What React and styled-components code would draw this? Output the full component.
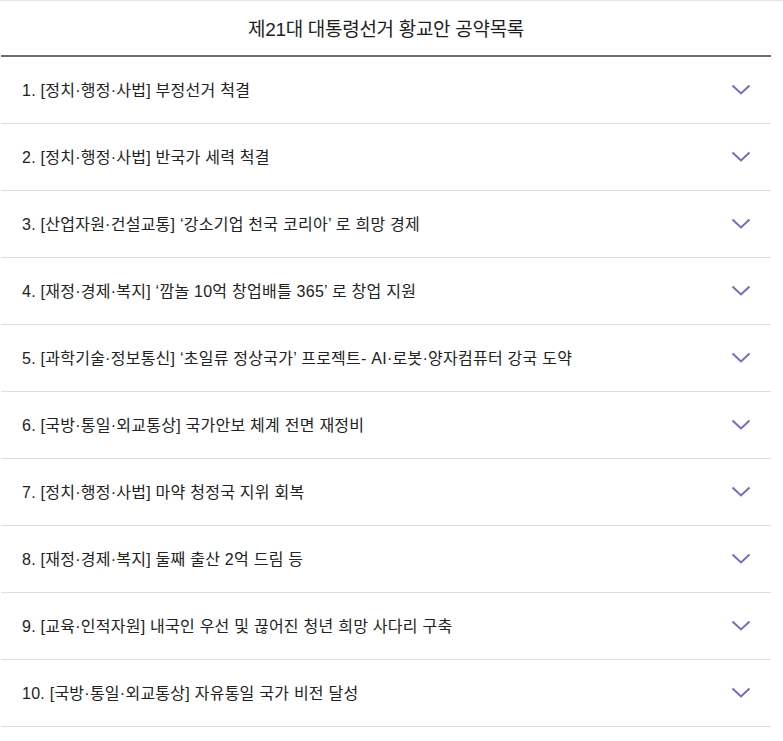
import React from "react";
import styled, { createGlobalStyle } from "styled-components";

const Global = createGlobalStyle`
  html, body { margin: 0; padding: 0; background: #fff; }
  body {
    border-top: 1px solid #e3e3e3;
    font-family: "Liberation Sans", "Noto Sans CJK KR", sans-serif;
    color: #222;
  }
`;

const Wrap = styled.div`
  width: 770px;
  margin-left: 1px;
`;

const Title = styled.h2`
  margin: 0;
  height: 53px;
  display: flex;
  align-items: center;
  justify-content: center;
  font-size: 19px;
  font-weight: 400;
  color: #1e1e1e;
  letter-spacing: -0.3px;
  border-bottom: 2px solid #6d6f76;
  padding-bottom: 1px;
`;

const List = styled.ul`
  list-style: none;
  margin: 0;
  padding: 0;
`;

const Row = styled.li`
  height: 66px;
  border-bottom: 1px solid #dedede;
  display: flex;
  align-items: center;
  justify-content: space-between;
  padding: 0 20px 0 21px;
  cursor: pointer;
`;

const Label = styled.span`
  font-size: 16px;
  color: #222;
  letter-spacing: 0.25px;
  margin-top: -2px;
`;

const Chevron = styled.svg`
  width: 20px;
  height: 11px;
  flex: none;
  margin-top: -1px;
`;

const items = [
  "1. [정치·행정·사법] 부정선거 척결",
  "2. [정치·행정·사법] 반국가 세력 척결",
  "3. [산업자원·건설교통] ‘강소기업 천국 코리아’ 로 희망 경제",
  "4. [재정·경제·복지] ‘깜놀 10억 창업배틀 365’ 로 창업 지원",
  "5. [과학기술·정보통신] ‘초일류 정상국가’ 프로젝트- AI·로봇·양자컴퓨터 강국 도약",
  "6. [국방·통일·외교통상] 국가안보 체계 전면 재정비",
  "7. [정치·행정·사법] 마약 청정국 지위 회복",
  "8. [재정·경제·복지] 둘째 출산 2억 드림 등",
  "9. [교육·인적자원] 내국인 우선 및 끊어진 청년 희망 사다리 구축",
  "10. [국방·통일·외교통상] 자유통일 국가 비전 달성",
];

export default function App() {
  return (
    <>
      <Global />
      <Wrap>
        <Title>제21대 대통령선거 황교안 공약목록</Title>
        <List>
          {items.map((t) => (
            <Row key={t}>
              <Label>{t}</Label>
              <Chevron viewBox="0 0 20 11">
                <path d="M1.5 1.5 L10 9.5 L18.5 1.5" fill="none" stroke="#7b69c0" strokeWidth="2" />
              </Chevron>
            </Row>
          ))}
        </List>
      </Wrap>
    </>
  );
}
